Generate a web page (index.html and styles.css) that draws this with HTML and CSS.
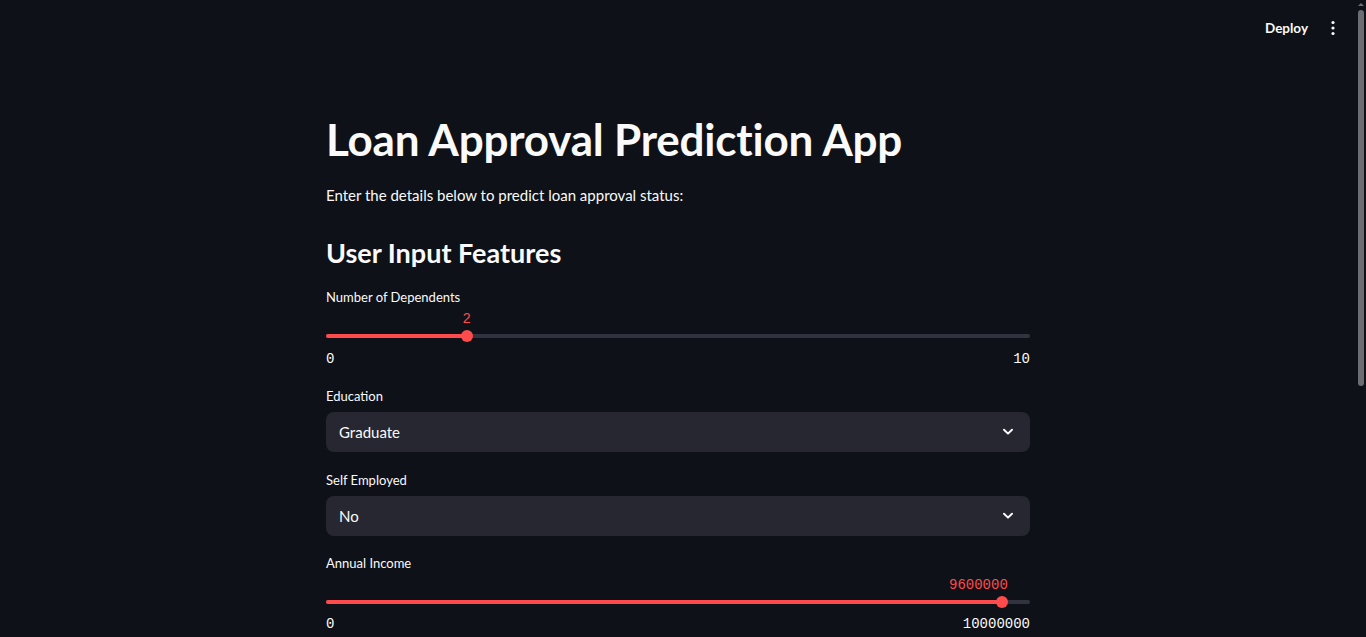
FILE: index.html
```html
<!DOCTYPE html>
<html lang="en">
<head>
<meta charset="utf-8">
<title>Loan Approval Prediction App</title>
<link rel="stylesheet" href="styles.css">
</head>
<body>
<div class="app">
  <header class="topbar">
    <button class="deploy">Deploy</button>
    <button class="menu" aria-label="Main menu">
      <svg width="16" height="16" viewBox="0 0 16 16"><circle cx="8" cy="2.5" r="1.6" fill="#fafafa"/><circle cx="8" cy="8" r="1.6" fill="#fafafa"/><circle cx="8" cy="13.5" r="1.6" fill="#fafafa"/></svg>
    </button>
  </header>
  <main class="main">
    <div class="block">
      <h1 class="title">Loan Approval Prediction App</h1>
      <p class="intro">Enter the details below to predict loan approval status:</p>
      <h3 class="subtitle">User Input Features</h3>

      <div class="widget">
        <label class="label">Number of Dependents</label>
        <div class="slider">
          <div class="slider-value-row"><span class="slider-value" style="left:20%">2</span></div>
          <div class="track"><div class="fill" style="width:20%"></div><div class="thumb" style="left:20%"></div></div>
          <div class="ticks"><span>0</span><span>10</span></div>
        </div>
      </div>

      <div class="widget">
        <label class="label">Education</label>
        <div class="select"><span>Graduate</span><svg class="chev" width="12" height="8" viewBox="0 0 12 8"><polyline points="2,1.8 6,5.6 10,1.8" fill="none" stroke="#fafafa" stroke-width="2" stroke-linecap="round" stroke-linejoin="round"/></svg></div>
      </div>

      <div class="widget">
        <label class="label">Self Employed</label>
        <div class="select"><span>No</span><svg class="chev" width="12" height="8" viewBox="0 0 12 8"><polyline points="2,1.8 6,5.6 10,1.8" fill="none" stroke="#fafafa" stroke-width="2" stroke-linecap="round" stroke-linejoin="round"/></svg></div>
      </div>

      <div class="widget widget--last">
        <label class="label">Annual Income</label>
        <div class="slider">
          <div class="slider-value-row"><span class="slider-value slider-value--end" style="left:96%">9600000</span></div>
          <div class="track"><div class="fill" style="width:96%"></div><div class="thumb" style="left:96%"></div></div>
          <div class="ticks"><span>0</span><span>10000000</span></div>
        </div>
      </div>
    </div>
  </main>
</div>
<div class="scrollbar">
  <div class="scroll-arrow"></div>
  <div class="scroll-thumb"></div>
</div>
</body>
</html>
```

FILE: styles.css
```css
html, body {
  height: 100%;
  overflow: hidden;
}
body {
  margin: 0;
  background: #0e1117;
  color: #fafafa;
  font-family: "Lato", "Noto Sans", sans-serif;
  display: flex;
}
.app {
  flex: 1;
  display: flex;
  flex-direction: column;
  min-width: 0;
}
.topbar {
  height: 56px;
  display: flex;
  justify-content: flex-end;
  align-items: center;
  padding-right: 7px;
  flex-shrink: 0;
}
.deploy {
  background: transparent;
  border: none;
  color: #fafafa;
  font-family: inherit;
  font-size: 13.5px;
  font-weight: 700;
  padding: 6px 9px 6px 10px;
}
.menu {
  background: transparent;
  border: none;
  padding: 6px 8px;
  display: flex;
}
.main {
  display: flex;
  justify-content: center;
}
.block {
  width: 704px;
  padding: 40px 16px 0;
  display: flex;
  flex-direction: column;
  gap: 16px;
}
.title {
  margin: 0;
  padding: 17px 0 1px;
  font-size: 44px;
  font-weight: 700;
  line-height: 1.2;
  letter-spacing: -0.2px;
}
.intro {
  margin: 0;
  font-size: 15px;
  line-height: 1.6;
}
.subtitle {
  margin: 0;
  padding: 14px 0 0;
  font-size: 27px;
  font-weight: 700;
  line-height: 1.2;
}
.widget {
  display: flex;
  flex-direction: column;
}
.widget--last {
  margin-top: -1px;
}
.label {
  font-size: 13px;
  line-height: 24px;
  margin-bottom: 4px;
}
.slider {
  display: flex;
  flex-direction: column;
}
.slider-value-row {
  position: relative;
  height: 17px;
}
.widget--last .slider-value-row {
  height: 17px;
}
.slider-value {
  position: absolute;
  bottom: 3px;
  transform: translateX(-50%);
  font-family: "Liberation Mono", "DejaVu Sans Mono", monospace;
  font-size: 14px;
  color: #ff4b4b;
}
.slider-value--end {
  transform: translateX(calc(-100% + 6px));
}
.track {
  position: relative;
  height: 4px;
  border-radius: 2px;
  background: #31333f;
  margin: 4px 0;
}
.fill {
  height: 100%;
  border-radius: 2px;
  background: #ff4b4b;
}
.thumb {
  position: absolute;
  top: 50%;
  width: 12px;
  height: 12px;
  border-radius: 50%;
  background: #ff4b4b;
  transform: translate(-50%, -50%);
}
.ticks {
  display: flex;
  justify-content: space-between;
  padding-top: 8px;
  font-family: "Liberation Mono", "DejaVu Sans Mono", monospace;
  font-size: 14px;
  line-height: 1.3;
}
.widget--last .ticks {
  padding-top: 7px;
}
.select {
  height: 40px;
  border-radius: 8px;
  background: #262730;
  display: flex;
  align-items: center;
  justify-content: space-between;
  padding: 0 16px 0 13px;
  font-size: 15px;
}
.chev {
  display: block;
}
.scrollbar {
  width: 10px;
  flex-shrink: 0;
  display: flex;
  flex-direction: column;
  align-items: center;
  padding-top: 3px;
  background: #0e1117;
}
.scroll-arrow {
  width: 0;
  height: 0;
  border-left: 3px solid transparent;
  border-right: 3px solid transparent;
  border-bottom: 3px solid #6f7074;
}
.scroll-thumb {
  margin-top: 4px;
  width: 6px;
  height: 376px;
  border-radius: 3px;
  background: #6c6d72;
}
```
